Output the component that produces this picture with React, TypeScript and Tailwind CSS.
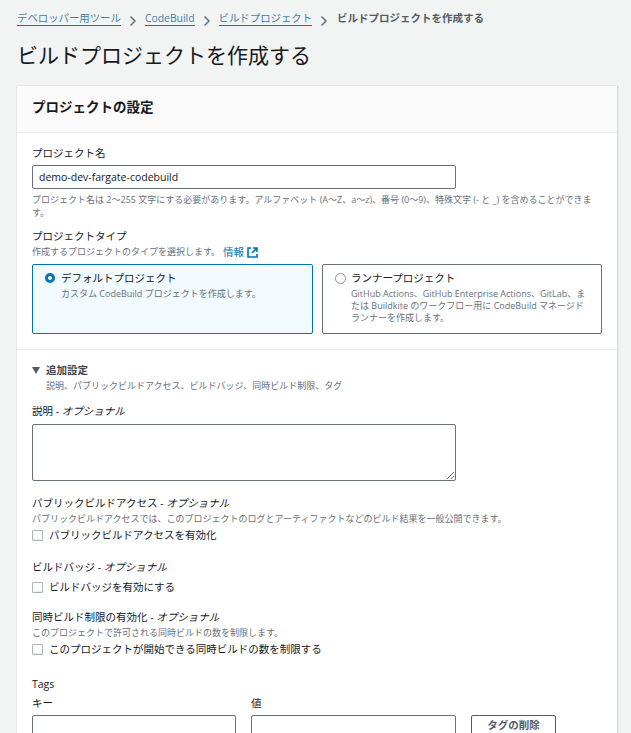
const font = { fontFamily: '"Open Sans", "Noto Sans CJK JP", sans-serif' };

function Crumb({ label }: { label: string }) {
  return (
    <>
      <a className="whitespace-nowrap border-b border-[#0972d3] leading-[14px] text-[#3f7fa8]">{label}</a>
      <svg width="8" height="12" viewBox="0 0 8 12" className="mx-[8px] mt-[4px] shrink-0" fill="none" stroke="#687078" strokeWidth="1.5">
        <path d="M1.500 1.500 6 6l-4.500 4.500" />
      </svg>
    </>
  );
}

function Checkbox({ label }: { label: string }) {
  return (
    <div className="flex items-center gap-[6px] text-[10.500px] leading-[16px] text-[#16191f]">
      <span className="h-[11px] w-[11px] rounded-[1px] border border-[#aab7b8] bg-white shadow-[inset_0_-1px_0_#eaeded]" />
      {label}
    </div>
  );
}

export default function App() {
  return (
    <div style={font} className="h-[733px] w-[631px] overflow-hidden bg-[#f2f3f3] pl-[17px] pt-[11px] text-[#16191f]">
      <nav className="flex h-[15px] items-start text-[10.400px]">
        <Crumb label="デベロッパー用ツール" />
        <Crumb label="CodeBuild" />
        <Crumb label="ビルドプロジェクト" />
        <span className="ml-[1px] whitespace-nowrap text-[10.500px] font-semibold leading-[14px] text-[#545b64]">ビルドプロジェクトを作成する</span>
      </nav>
      <h1 className="mt-[14px] text-[21px] leading-[30px]">ビルドプロジェクトを作成する</h1>

      <section className="mt-[16px] w-[601px] border-r border-[#d5dbdb] bg-white shadow-[0_0_1px_#aab7b8]">
        <header className="flex h-[47px] items-center border-b border-[#eaeded] bg-[#fafafa] px-[15px] pb-[4px] text-[13.500px] font-bold">
          プロジェクトの設定
        </header>

        <div className="px-[15px] pt-[12px]">
          <label className="block text-[10.500px] leading-[16px]">プロジェクト名</label>
          <input
            readOnly
            value="demo-dev-fargate-codebuild"
            style={font}
            className="mt-[4px] block h-[24px] w-[424px] rounded-[2px] border border-[#687078] bg-white px-[6px] text-[10.500px] text-[#16191f]"
          />
          <p className="mt-[4px] w-[566px] text-[9px] leading-[13px] text-[#687078]">
            プロジェクト名は 2～255 文字にする必要があります。アルファベット (A～Z、a～z)、番号 (0～9)、特殊文字 (- と _) を含めることができます。
          </p>

          <label className="mt-[9px] block text-[10.500px] leading-[16px]">プロジェクトタイプ</label>
          <p className="mt-[1px] flex items-center text-[9px] leading-[14px] text-[#687078]">
            作成するプロジェクトのタイプを選択します。
            <span className="ml-[3px] text-[10.500px] text-[#0073bb]">情報</span>
            <svg width="11" height="11" viewBox="0 0 11 11" className="ml-[3px]" fill="none" stroke="#0073bb" strokeWidth="1.600">
              <path d="M4 1H1v9h9V7M6 1h4v4M10 1 5 6" />
            </svg>
          </p>

          <div className="mt-[5px] flex gap-[9px]">
            <div className="flex h-[70px] w-[281px] gap-[6px] rounded-[2px] border border-[#0073bb] bg-[#f1faff] pl-[12px] pt-[5px]">
              <span className="mt-[3px] h-[10px] w-[10px] shrink-0 rounded-full border-[3px] border-[#0073bb] bg-white" />
              <div>
                <div className="text-[10.500px] leading-[16px]">デフォルトプロジェクト</div>
                <div className="mt-[2px] text-[9px] leading-[12px] text-[#687078]">カスタム CodeBuild プロジェクトを作成します。</div>
              </div>
            </div>
            <div className="flex h-[70px] w-[280px] gap-[5px] rounded-[2px] border border-[#687078] bg-white pl-[12px] pt-[5px]">
              <span className="mt-[3px] h-[11px] w-[11px] shrink-0 rounded-full border border-[#879596] bg-white" />
              <div>
                <div className="text-[10.500px] leading-[16px]">ランナープロジェクト</div>
                <div className="mt-[2px] w-[236px] text-[9px] leading-[12px] text-[#687078]">
                  GitHub Actions、GitHub Enterprise Actions、GitLab、または Buildkite のワークフロー用に CodeBuild マネージドランナーを作成します。
                </div>
              </div>
            </div>
          </div>
        </div>

        <hr className="mt-[15px] border-[#eaeded]" />

        <div className="px-[15px] pt-[12px]">
          <div className="flex items-center gap-[6px] text-[10.500px] font-semibold leading-[16px] text-[#414750]">
            <svg width="8" height="7" viewBox="0 0 8 7">
              <path d="M0 0h8L4 7z" fill="#545b64" />
            </svg>
            追加設定
          </div>
          <p className="mt-[1px] pl-[14px] text-[9px] leading-[13px] text-[#687078]">
            説明、パブリックビルドアクセス、ビルドバッジ、同時ビルド制限、タグ
          </p>

          <label className="mt-[11px] block text-[10.500px] leading-[16px]">
            説明 - <i>オプショナル</i>
          </label>
          <textarea
            readOnly
            className="mt-[5px] block h-[57px] w-[424px] rounded-[2px] border border-[#687078] bg-white"
          />

          <label className="mt-[14px] block text-[10.500px] leading-[16px]">
            パブリックビルドアクセス - <i>オプショナル</i>
          </label>
          <p className="mt-[1px] text-[9px] leading-[14px] text-[#687078]">
            パブリックビルドアクセスでは、このプロジェクトのログとアーティファクトなどのビルド結果を一般公開できます。
          </p>
          <div className="mt-[1px]">
            <Checkbox label="パブリックビルドアクセスを有効化" />
          </div>

          <label className="mt-[16px] block text-[10.500px] leading-[16px]">
            ビルドバッジ - <i>オプショナル</i>
          </label>
          <div className="mt-[4px]">
            <Checkbox label="ビルドバッジを有効にする" />
          </div>

          <label className="mt-[14px] block text-[10.500px] leading-[16px]">
            同時ビルド制限の有効化 - <i>オプショナル</i>
          </label>
          <p className="mt-[1px] text-[9px] leading-[14px] text-[#687078]">
            このプロジェクトで許可される同時ビルドの数を制限します。
          </p>
          <div className="mt-[1px]">
            <Checkbox label="このプロジェクトが開始できる同時ビルドの数を制限する" />
          </div>

          <label className="mt-[19px] block text-[10.500px] leading-[16px]">Tags</label>
          <div className="mt-[3px] flex items-start">
            <div className="w-[219px]">
              <label className="block text-[10.500px] leading-[16px]">キー</label>
              <div className="mt-[4px] h-[30px] w-[204px] rounded-[2px] border border-[#687078] bg-white" />
            </div>
            <div className="w-[220px]">
              <label className="block text-[10.500px] leading-[16px]">値</label>
              <div className="mt-[4px] h-[30px] w-[205px] rounded-[2px] border border-[#687078] bg-white" />
            </div>
            <button className="mt-[20px] h-[30px] w-[85px] rounded-[2px] border border-[#545b64] bg-white pb-[8px] text-[10.500px] font-semibold text-[#545b64]">
              タグの削除
            </button>
          </div>
        </div>
      </section>
    </div>
  );
}
